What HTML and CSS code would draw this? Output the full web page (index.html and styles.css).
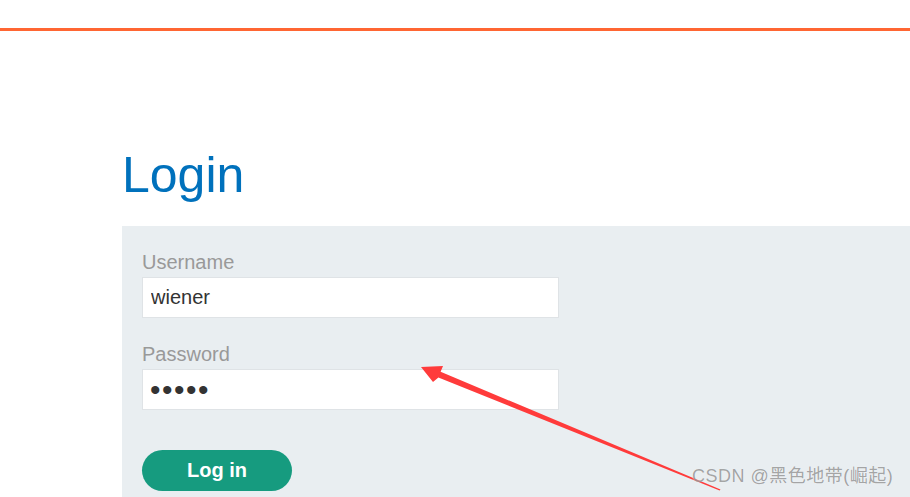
FILE: index.html
```html
<!DOCTYPE html>
<html lang="en">

<head>
    <meta charset="UTF-8" />
    <title>Login</title>
    <link rel="stylesheet" href="styles.css">
</head>

<body>
    <header class="top-bar"></header>

    <main class="container">
        <h1 class="page-title">Login</h1>
        <section class="login-panel">
            <form class="login-form">
                <label for="username">Username</label>
                <input id="username" type="text" value="wiener">
                <label for="password">Password</label>
                <input id="password" type="password" value="peter">
                <button type="button" class="btn-login">Log in</button>
            </form>
        </section>
    </main>

    <!-- annotation overlay -->
    <svg class="annotation" width="910" height="497" viewBox="0 0 910 497">
        <polygon fill="#ff3b3b" points="421,367 443,366 440.6,371.8 720.5,489.4 719.6,490.6 438.4,377.4 433,382" />
    </svg>
    <div class="watermark">CSDN @黑色地带(崛起)</div>
</body>

</html>
```

FILE: styles.css
```css
:root {
    --orange: #ff6633;
    --blue: #0071bc;
    --panel: #e9eef1;
    --green: #169b7f;
    --label: #999999;
    --text: #333333;
}

* {
    margin: 0;
    padding: 0;
    box-sizing: border-box;
}

html,
body {
    height: 100%;
}

body {
    font-family: 'Liberation Sans', Arial, sans-serif;
    background: #fff;
    color: var(--text);
    overflow: hidden;
    position: relative;
}

.top-bar {
    height: 31px;
    border-bottom: 3px solid var(--orange);
}

.container {
    padding-left: 122px;
}

.page-title {
    font-size: 50px;
    font-weight: 400;
    line-height: 57px;
    color: var(--blue);
    margin-top: 116px;
    margin-bottom: 22px;
}

.login-panel {
    background: var(--panel);
    padding: 25px 20px 40px;
}

.login-form {
    display: flex;
    flex-direction: column;
    align-items: flex-start;
}

.login-form label {
    font-size: 20px;
    line-height: 23px;
    color: var(--label);
    margin-bottom: 3px;
}

.login-form input {
    width: 417px;
    height: 41px;
    border: 1px solid #dfe3e6;
    background: #fff;
    font-family: 'Liberation Sans', Arial, sans-serif;
    font-size: 20px;
    color: var(--text);
    padding: 0 8px;
    outline: none;
    margin-bottom: 25px;
}

.login-form input[type="password"] {
    margin-bottom: 40px;
    font-size: 30px;
    letter-spacing: 1.5px;
    padding-left: 7px;
}

.btn-login {
    width: 150px;
    height: 41px;
    border: none;
    border-radius: 21px;
    background: var(--green);
    color: #fff;
    font-family: 'Liberation Sans', Arial, sans-serif;
    font-size: 20px;
    font-weight: 700;
    cursor: pointer;
}

.annotation {
    position: absolute;
    top: 0;
    left: 0;
    pointer-events: none;
}

.watermark {
    position: absolute;
    left: 692px;
    top: 465px;
    font-family: 'Liberation Sans', 'Noto Sans CJK SC', sans-serif;
    font-size: 18px;
    line-height: 22px;
    letter-spacing: 0.5px;
    color: rgba(90, 90, 90, 0.55);
    text-shadow: 0 0 1px rgba(255, 255, 255, 0.8);
    white-space: nowrap;
}
```
